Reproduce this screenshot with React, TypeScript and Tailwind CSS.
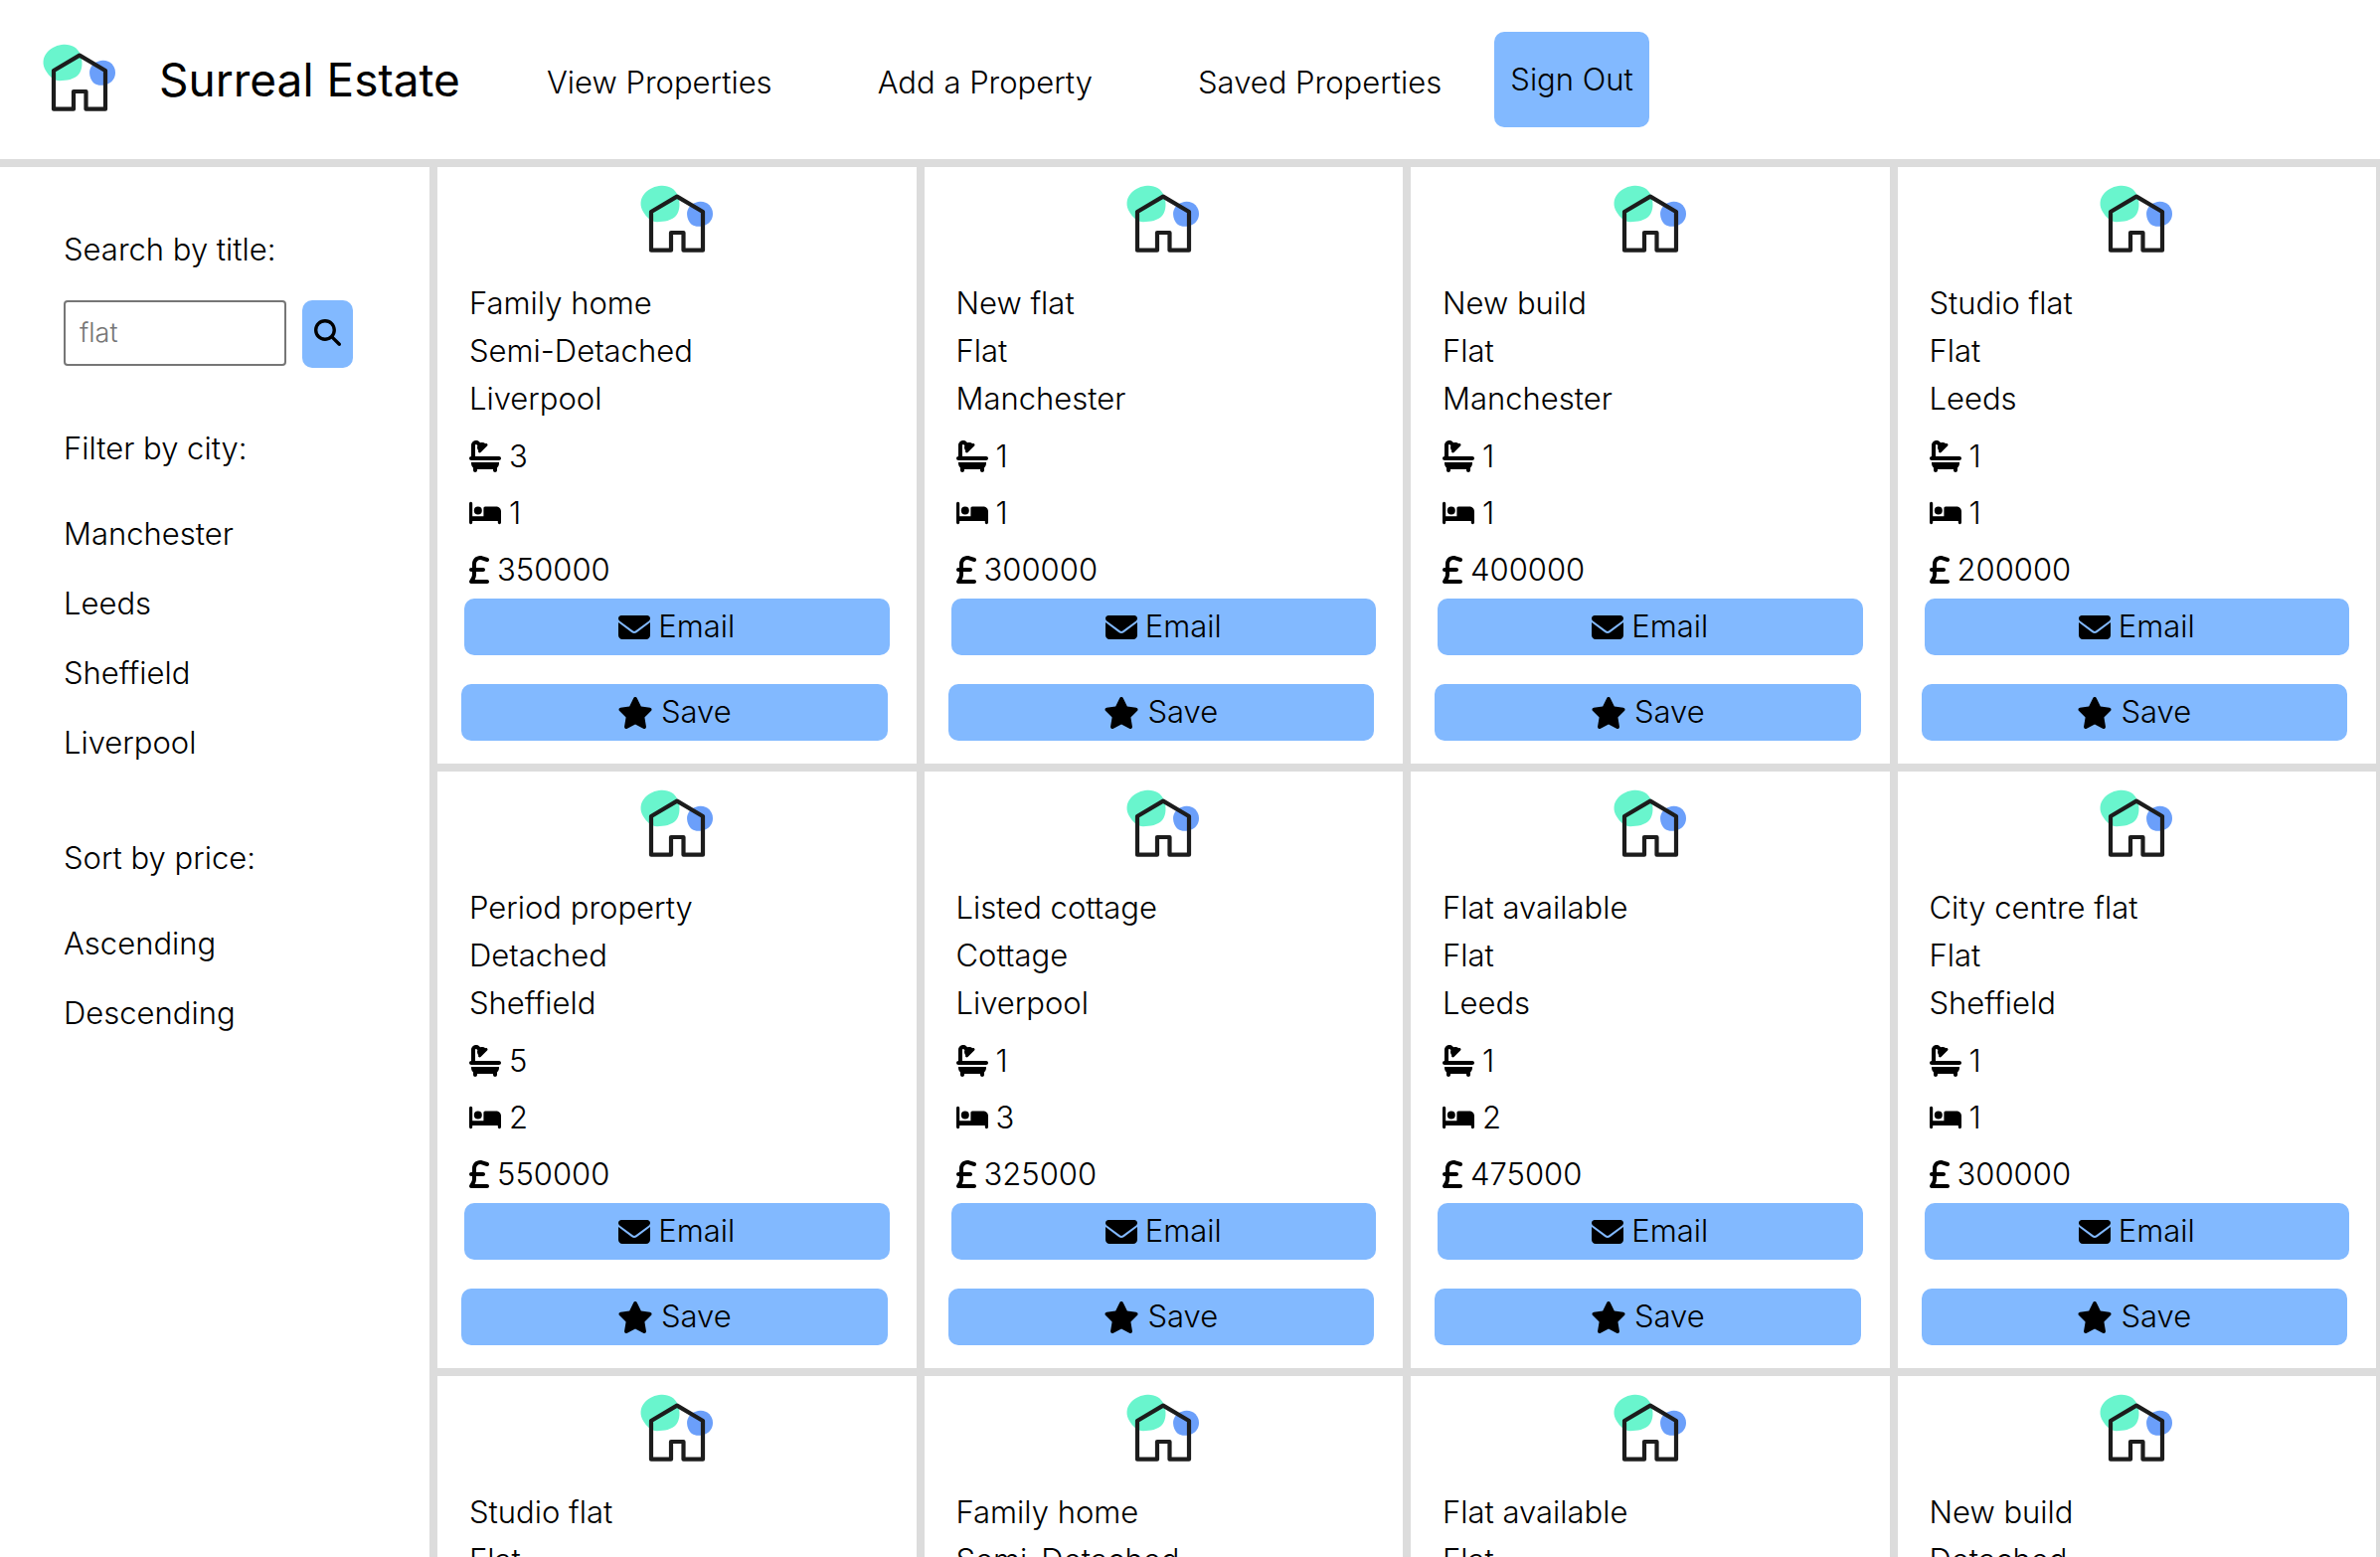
import {
  FaBath,
  FaBed,
  FaEnvelope,
  FaMagnifyingGlass,
  FaStar,
  FaSterlingSign,
} from "react-icons/fa6";

type Property = {
  title: string;
  type: string;
  city: string;
  bathrooms: number;
  bedrooms: number;
  price: number;
};

const properties: Property[] = [
  { title: "Family home", type: "Semi-Detached", city: "Liverpool", bathrooms: 3, bedrooms: 1, price: 350000 },
  { title: "New flat", type: "Flat", city: "Manchester", bathrooms: 1, bedrooms: 1, price: 300000 },
  { title: "New build", type: "Flat", city: "Manchester", bathrooms: 1, bedrooms: 1, price: 400000 },
  { title: "Studio flat", type: "Flat", city: "Leeds", bathrooms: 1, bedrooms: 1, price: 200000 },
  { title: "Period property", type: "Detached", city: "Sheffield", bathrooms: 5, bedrooms: 2, price: 550000 },
  { title: "Listed cottage", type: "Cottage", city: "Liverpool", bathrooms: 1, bedrooms: 3, price: 325000 },
  { title: "Flat available", type: "Flat", city: "Leeds", bathrooms: 1, bedrooms: 2, price: 475000 },
  { title: "City centre flat", type: "Flat", city: "Sheffield", bathrooms: 1, bedrooms: 1, price: 300000 },
  { title: "Studio flat", type: "Flat", city: "Manchester", bathrooms: 1, bedrooms: 1, price: 200000 },
  { title: "Family home", type: "Semi-Detached", city: "Leeds", bathrooms: 2, bedrooms: 3, price: 350000 },
  { title: "Flat available", type: "Flat", city: "Sheffield", bathrooms: 1, bedrooms: 2, price: 250000 },
  { title: "New build", type: "Detached", city: "Liverpool", bathrooms: 2, bedrooms: 4, price: 450000 },
];

const navLinks = ["View Properties", "Add a Property", "Saved Properties"];
const cities = ["Manchester", "Leeds", "Sheffield", "Liverpool"];
const sortOrders = ["Ascending", "Descending"];

function Logo() {
  return (
    <svg viewBox="0 0 100 90" className="h-[90px] w-[100px] shrink-0" aria-hidden="true">
      <path
        d="M34 14.7C42 14.3 48 18 50.5 24C53.5 31 53.3 40 49 45C44.500 50 37 51 30 51.200C23.500 51 19.500 46.500 16 41C12.500 35.500 12.500 28 17.500 22.500C22 17.500 28 15 34 14.700Z"
        fill="#69f5cd"
      />
      <path
        d="M73.500 30.700C80.500 30.500 86 36 86 43C86 48.500 83 52.500 78 54.500C74 56 68.500 56.500 65 54C61.500 51.500 59.500 45.500 60.200 41C61.200 35 67 31 73.500 30.700Z"
        fill="#6b9ffa"
      />
      <path
        d="M24 41L50 25.600L76 41V79.700H56.500V62H44V79.700H24Z"
        fill="none"
        stroke="#1c1c1c"
        strokeWidth="4.200"
        strokeLinejoin="round"
      />
    </svg>
  );
}

function Header() {
  return (
    <header className="flex h-42 shrink-0 items-center border-b-8 border-[#dcdcdc] pl-[30px]">
      <div className="pb-2.5">
        <Logo />
      </div>
      <h1 className="ml-[30px] whitespace-nowrap text-[46px] font-normal leading-none">
        Surreal Estate
      </h1>
      <nav className="ml-[34px] flex pt-1.5">
        {navLinks.map((label) => (
          <a key={label} href="#" className="whitespace-nowrap px-[53px] leading-12">
            {label}
          </a>
        ))}
      </nav>
      <button type="button" className="h-24 whitespace-nowrap rounded-[10px] bg-[#82b9ff] px-4">
        Sign Out
      </button>
    </header>
  );
}

function FilterGroup({ title, options }: { title: string; options: string[] }) {
  return (
    <section>
      <h2 className="mb-[27px] font-[350] leading-12">{title}</h2>
      <ul>
        {options.map((option) => (
          <li key={option} className="leading-[70px]">
            <a href="#">{option}</a>
          </li>
        ))}
      </ul>
    </section>
  );
}

function Sidebar() {
  return (
    <aside className="flex w-[432px] shrink-0 flex-col gap-[57px] pl-16 pt-[59px]">
      <form>
        <label htmlFor="title-search" className="mb-[27px] block font-[350] leading-12">
          Search by title:
        </label>
        <div className="flex items-start gap-4">
          <input
            id="title-search"
            type="text"
            placeholder="flat"
            className="h-[66px] w-56 rounded border-2 border-[#767676] px-3.5 pb-0.5 text-[27px] placeholder:text-[#757575]"
          />
          <button
            type="submit"
            aria-label="Search"
            className="flex h-[68px] w-[51px] items-center justify-center rounded-[10px] bg-[#82b9ff] pb-1"
          >
            <FaMagnifyingGlass className="size-[27px]" />
          </button>
        </div>
      </form>
      <FilterGroup title="Filter by city:" options={cities} />
      <FilterGroup title="Sort by price:" options={sortOrders} />
    </aside>
  );
}

function PropertyCard({ property }: { property: Property }) {
  return (
    <article className="flex flex-col border-b-8 border-r-8 border-[#dcdcdc] pb-[23px] pt-1">
      <div className="mb-[19px] flex justify-center">
        <Logo />
      </div>
      <div className="px-8 leading-12">
        <h3>{property.title}</h3>
        <p>{property.type}</p>
        <p>{property.city}</p>
      </div>
      <div className="mt-[5px] px-8 pb-px leading-[57px]">
        <p className="flex items-center gap-2">
          <FaBath className="size-8" />
          {property.bathrooms}
        </p>
        <p className="flex items-center gap-2">
          <FaBed className="size-8" />
          {property.bedrooms}
        </p>
        <p className="flex items-center gap-2">
          <FaSterlingSign className="h-8 w-5" />
          {property.price}
        </p>
      </div>
      <a
        href="#"
        className="mx-[27px] flex h-[57px] items-center justify-center gap-2 rounded-[10px] bg-[#82b9ff]"
      >
        <FaEnvelope className="size-8" />
        Email
      </a>
      <button
        type="button"
        className="ml-6 mr-[29px] mt-[29px] flex h-[57px] items-center justify-center gap-2 rounded-[10px] bg-[#82b9ff]"
      >
        <FaStar className="h-8 w-9" />
        Save
      </button>
    </article>
  );
}

export default function App() {
  return (
    <div className="flex h-screen flex-col overflow-hidden bg-white font-['Inter',sans-serif] text-[31px] font-light text-black">
      <Header />
      <div className="flex min-h-0 flex-1">
        <Sidebar />
        <main className="-mr-1 grid flex-1 auto-rows-max grid-cols-4 border-l-8 border-[#dcdcdc]">
          {properties.map((property, index) => (
            <PropertyCard key={index} property={property} />
          ))}
        </main>
      </div>
    </div>
  );
}
